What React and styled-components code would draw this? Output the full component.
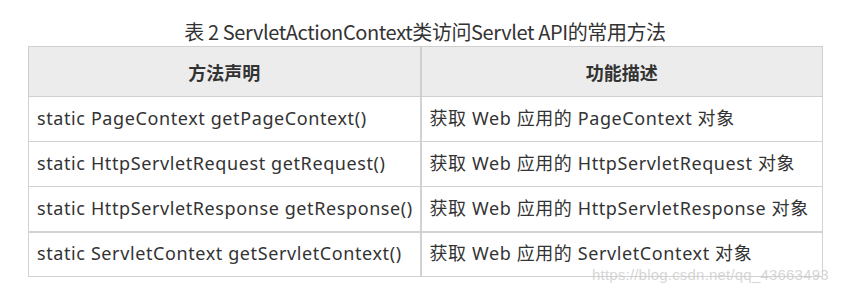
import React from "react";
import styled, { createGlobalStyle } from "styled-components";

const GlobalStyle = createGlobalStyle`
  html, body {
    margin: 0;
    padding: 0;
    background: #fff;
  }
  body {
    font-family: "Noto Sans", "Noto Sans CJK SC", sans-serif;
    color: #333;
  }
`;

const Page = styled.div`
  position: relative;
  width: 845px;
  height: 292px;
  padding: 17px 0 0 28px;
  box-sizing: border-box;
`;

const Caption = styled.div`
  width: 794px;
  text-align: center;
  font-size: 20px;
  line-height: 29px;
  color: #333;
  font-family: "Noto Sans CJK SC", sans-serif;
  letter-spacing: -0.4px;
`;

const Table = styled.table`
  width: 794px;
  border-collapse: collapse;
  table-layout: fixed;
  font-size: 18px;
`;

const HeadCell = styled.th`
  height: 50px;
  padding: 0;
  box-sizing: border-box;
  background: #ececec;
  border: 1px solid #cfcfcf;
  border-right-width: ${(p) => (p.$first ? "2px" : "1px")};
  font-family: "Noto Sans CJK SC", sans-serif;
  font-weight: 700;
  font-size: 18px;
  line-height: 24px;
  color: #333;
  text-align: center;
`;

const Cell = styled.td`
  height: 45px;
  padding: 0 0 2px 8px;
  box-sizing: border-box;
  border: 1px solid #d2d2d2;
  border-right-width: ${(p) => (p.$first ? "2px" : "1px")};
  border-top-width: ${(p) => (p.$thick ? "2px" : "1px")};
  white-space: nowrap;
  font-family: "Noto Sans", "Noto Sans CJK SC", sans-serif;
  line-height: 24px;
  letter-spacing: 0.6px;
  color: #333;
`;

const Watermark = styled.div`
  position: absolute;
  left: 592px;
  top: 266px;
  font-family: "Liberation Sans", sans-serif;
  font-size: 15px;
  line-height: 17px;
  color: rgba(200, 200, 200, 0.75);
  letter-spacing: 0.2px;
`;

const rows = [
  ["static PageContext getPageContext()", "获取 Web 应用的 PageContext 对象"],
  ["static HttpServletRequest getRequest()", "获取 Web 应用的 HttpServletRequest 对象"],
  ["static HttpServletResponse getResponse()", "获取 Web 应用的 HttpServletResponse 对象"],
  ["static ServletContext getServletContext()", "获取 Web 应用的 ServletContext 对象"],
];

export default function App() {
  return (
    <>
      <GlobalStyle />
      <Page>
        <Caption>表 2 ServletActionContext类访问Servlet API的常用方法</Caption>
        <Table>
          <colgroup>
            <col style={{ width: 392 }} />
            <col style={{ width: 402 }} />
          </colgroup>
          <thead>
            <tr>
              <HeadCell $first>方法声明</HeadCell>
              <HeadCell>功能描述</HeadCell>
            </tr>
          </thead>
          <tbody>
            {rows.map((r, i) => (
              <tr key={i}>
                <Cell $first $thick={i === 3}>{r[0]}</Cell>
                <Cell $thick={i === 3}>{r[1]}</Cell>
              </tr>
            ))}
          </tbody>
        </Table>
        <Watermark>https://blog.csdn.net/qq_43663493</Watermark>
      </Page>
    </>
  );
}
